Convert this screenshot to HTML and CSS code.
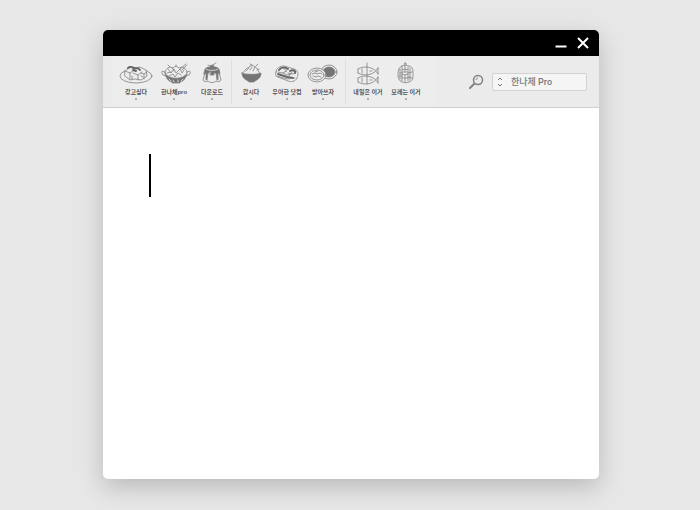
FILE: index.html
```html
<!DOCTYPE html>
<html lang="ko">
<head>
    <meta charset="UTF-8">
    <meta name="viewport" content="width=device-width, initial-scale=1.0">
    <title>한나체 Pro</title>
    <link rel="stylesheet" href="styles.css">
</head>
<body>

<div class="window">
    <header class="title-bar">
        <button class="window-btn" type="button" aria-label="최소화">
            <svg width="12" height="12" viewBox="0 0 12 12"><path d="M0.500 9.500h11"/></svg>
        </button>
        <button class="window-btn" type="button" aria-label="닫기">
            <svg width="12" height="12" viewBox="0 0 12 12"><path d="M1 1l10 10M11 1L1 11"/></svg>
        </button>
    </header>

    <div class="toolbar">
        <nav class="tools">
            <div class="tool-group">
                <button class="tool" type="button">
                    <!-- 접시 위의 두부 -->
                    <svg class="icon" viewBox="0 0 36 26">
                        <ellipse cx="18" cy="17" rx="16" ry="7"/>
                        <path class="paper" d="M7 12l5-4 5 1 5-1 6 3 1 6-6 4-6-1-5 1-5-4z"/>
                        <path d="M7 12l5 2v6M12 14l4-3M15 14l5 2v5M20 16l4-3M23 14l3 1v5M26 15l3-2M14 17v3M23 17l2 1"/>
                        <path class="thick" d="M10 9c2-2 4-1 6 0s4-1 6 2M15 11l3 1"/>
                    </svg>
                    <span class="tool-name">갖고싶다</span>
                </button>
                <button class="tool" type="button">
                    <!-- 전골 냄비 -->
                    <svg class="icon" viewBox="0 0 36 26">
                        <path class="fill" d="M9 14c1 5 3 8 7 9v1h8v-1c4-1 6-4 7-9z"/>
                        <path d="M9 13c-4-2-4 0-2 3l3 1M31 13c4-2 4 0 2 3l-3 1"/>
                        <path class="paper" d="M9 14c0-3 2-5 5-6l3 1 3-2 3 2 3-1c3 1 5 3 5 6-3 7-19 7-22 0z"/>
                        <path d="M12 10l3 4 3-4 2 4 4-4 2 4 2-3M11 14l4-1M16 9l2 3M13 17l4-2 2 3 3-4 3 2M24 10l6-5M26 11l5-5M14 8l-2-2M20 7V6"/>
                        <path class="paper-line" d="M13 20l2 2M17 21l1 2M22 21v2M27 20l-2 2"/>
                    </svg>
                    <span class="tool-name">한나체pro</span>
                </button>
                <button class="tool" type="button">
                    <!-- 푸딩 -->
                    <svg class="icon" viewBox="0 0 36 26">
                        <path class="paper" d="M12 10L9 21c1 2 3 2 5 1 2 2 6 2 8 0 2 1 4 1 5-1l-3-11z"/>
                        <path class="fill" d="M11 10c1-3 13-3 14 0l1 5-2-1v7h-1l-1-7h-2v2h-4v-2h-2l-1 7h-1v-7l-2 1z"/>
                        <path class="paper-line" d="M12 10c3 2 9 2 12 0M16 13v2"/>
                        <circle class="fill" cx="18" cy="8" r="2"/>
                        <path d="M18 7c1-2 3-2 4-3M14 6l2 1"/>
                    </svg>
                    <span class="tool-name">다운로드</span>
                </button>
            </div>

            <div class="tool-group narrow">
                <button class="tool" type="button">
                    <!-- 밥 한 그릇 -->
                    <svg class="icon" viewBox="0 0 36 26">
                        <path class="paper" d="M10 15c0-3 2-3 3-5 2-2 3-1 4-3 2-1 3-1 5 1 3 1 3 4 5 7z"/>
                        <path d="M13 12l3-3M17 11l2-3M20 12l2-4M23 7l2-2M24 11l2-1M19 6l-2-1"/>
                        <path class="fill" d="M9 14c4 2 15 2 19 0 0 4-2 6-6 8l-1 1h-5l-1-1c-4-2-6-4-6-8z"/>
                    </svg>
                    <span class="tool-name">갑시다</span>
                </button>
                <button class="tool" type="button">
                    <!-- 도시락 -->
                    <svg class="icon" viewBox="0 0 36 26">
                        <path class="paper" d="M7 13c0-4 4-6 8-6l10 3c4 1 5 5 3 9-2 4-6 4-9 3L9 18c-3-1-3-3-2-5z"/>
                        <path class="thick" d="M10 11c2-3 6-3 9-1M21 12c3-2 6 0 5 2M9 15l9 3 6 1"/>
                        <path d="M9 13l4 1 5-2-3-2M19 14l5 1 2-1M8 17l10 3 8-1M14 14l4 2 4-1M20 17l3-4"/>
                    </svg>
                    <span class="tool-name">우아한 닷컴</span>
                </button>
                <button class="tool" type="button">
                    <!-- 겹쳐 놓은 접시 -->
                    <svg class="icon" viewBox="0 0 36 26">
                        <ellipse class="paper" cx="24" cy="13" rx="8" ry="7"/>
                        <ellipse class="fill" cx="24" cy="13" rx="6" ry="5"/>
                        <ellipse class="paper" cx="12" cy="16" rx="9" ry="7"/>
                        <ellipse cx="12" cy="16" rx="7" ry="5"/>
                        <path d="M7 15l3-1 2 1 3-1 2 1M8 17l3 1 2-1 3 1M10 13l3-1"/>
                    </svg>
                    <span class="tool-name">받아쓰자</span>
                </button>
            </div>

            <div class="tool-group">
                <button class="tool" type="button">
                    <!-- 생선 꼬치 -->
                    <svg class="icon" viewBox="0 0 36 26">
                        <path d="M17 4v21"/>
                        <path d="M28 9c-3 7-14 9-20 5M28 15c-3-7-14-9-20-5M28 9v6M8 10v4M12 10v4M20 12h2"/>
                        <path d="M28 18c-3 7-14 9-20 5M28 24c-3-7-14-9-20-5M28 18v6M8 19v4M12 19v4M20 21h2"/>
                    </svg>
                    <span class="tool-name">내일은 이거</span>
                </button>
                <button class="tool" type="button">
                    <!-- 어묵 꼬치 -->
                    <svg class="icon" viewBox="0 0 36 26">
                        <path d="M17 4h1v5h-1z"/>
                        <path class="paper" d="M14 7c2-1 5-1 7 0 4 1 4 4 4 8s0 7-4 8c-2 1-5 1-7 0-3-1-4-4-4-8s1-7 4-8z"/>
                        <path d="M14 8v14M17 7v6M20 8v14M22 9v12M12 10v10M14 11l3-1 3 1M12 14h2M14 15l3 1 3-1M20 14l4-1M14 19h6M20 18l4 1M17 16v7M11 17h3M15 13h4"/>
                    </svg>
                    <span class="tool-name">모레는 이거</span>
                </button>
            </div>
        </nav>

        <div class="font-picker">
            <label for="font" aria-label="글꼴">
                <svg class="search-icon" width="16" height="16" viewBox="0 0 16 16">
                    <circle cx="10" cy="6" r="4.500"/>
                    <path class="shine" d="M8 6c0-1 1-2 2-2"/>
                    <path class="handle" d="M6 10l-4 4"/>
                </svg>
            </label>
            <div class="select-box">
                <svg class="arrows" width="6" height="10" viewBox="0 0 6 10"><path d="M1 3l2-2 2 2M1 7l2 2 2-2"/></svg>
                <select id="font">
                    <option>한나체 Pro</option>
                </select>
            </div>
        </div>
    </div>

    <main class="editor">
        <span class="cursor"></span>
        <textarea class="text" aria-label="내용"></textarea>
    </main>
</div>

</body>
</html>
```

FILE: styles.css
```css
* {
    box-sizing: border-box;
}
body {
    font-family: "Liberation Sans", "Noto Sans CJK KR", sans-serif;
    margin: 0;
    padding: 30px 101px 31px 103px;
    min-height: 100vh;
    display: flex;
    background-color: #e7e7e7;
}
button {
    border: 0;
    padding: 0;
    background: none;
    font-family: inherit;
    cursor: pointer;
}
.window {
    flex: 1;
    display: flex;
    flex-direction: column;
    background-color: #fff;
    border-radius: 5px;
    overflow: hidden;
    box-shadow: 0 8px 24px rgba(0, 0, 0, 0.2);
}

/* 제목 표시줄 */
.title-bar {
    display: flex;
    justify-content: flex-end;
    align-items: center;
    gap: 10px;
    height: 26px;
    padding-right: 10px;
    background-color: #000;
}
.window-btn {
    display: flex;
}
.window-btn svg {
    fill: none;
    stroke: #fff;
    stroke-width: 2;
}

/* 도구 모음 */
.toolbar {
    display: flex;
    flex-wrap: wrap;
    justify-content: space-between;
    align-items: center;
    padding: 0 12px 0 10px;
    background-color: #ebebeb;
    border-bottom: 1px solid #cfcfcf;
}
.tools {
    display: flex;
    padding: 3px 10px 3px 4px;
    background-color: #ededed;
}
.tool-group {
    display: flex;
}
.tool-group + .tool-group {
    border-left: 1px solid #dedede;
}
.tool-group:last-child {
    padding-left: 3px;
}
.tool {
    display: flex;
    flex-direction: column;
    align-items: center;
    width: 38px;
    height: 45px;
}
.narrow {
    padding: 0 4px 0 1px;
}
.narrow .tool {
    width: 36px;
}
.tool::after {
    content: '';
    width: 2px;
    height: 2px;
    margin-top: 2px;
    border-radius: 50%;
    background-color: #999;
}
.tool-name {
    margin-top: 3px;
    color: #555;
    font-size: 6px;
    font-weight: bold;
    line-height: 8px;
    white-space: nowrap;
}
.icon {
    width: 36px;
    height: 26px;
    flex-shrink: 0;
    fill: none;
    stroke: #808080;
    stroke-width: 0.8;
    stroke-linecap: round;
    stroke-linejoin: round;
}
.icon .fill {
    fill: #747474;
}
.icon .paper {
    fill: #ededed;
}
.icon .paper-line {
    stroke: #ededed;
}
.icon .thick {
    stroke: #666;
    stroke-width: 2;
}

/* 글꼴 선택 */
.font-picker {
    display: flex;
    align-items: center;
    gap: 8px;
}
.font-picker label {
    display: flex;
}
.search-icon {
    fill: none;
    stroke: #808080;
    stroke-width: 1.5;
}
.search-icon .shine {
    stroke-width: 1;
}
.search-icon .handle {
    stroke-width: 2;
    stroke-linecap: round;
}
.select-box {
    display: flex;
    align-items: center;
    gap: 8px;
    width: 95px;
    height: 18px;
    padding-left: 4px;
    border: 1px solid #d2d2d2;
    border-radius: 2px;
    background-color: #f5f5f5;
}
.arrows {
    fill: none;
    stroke: #777;
}
.select-box select {
    flex: 1;
    min-width: 0;
    height: 16px;
    padding: 0;
    border: 0;
    appearance: none;
    background: none;
    color: #777;
    font-family: Roboto, "Noto Sans CJK KR", sans-serif;
    font-size: 9px;
    font-weight: 500;
    line-height: 16px;
}

/* 편집 영역 */
.editor {
    flex: 1;
    display: flex;
    align-items: flex-start;
    padding: 46px;
}
.cursor {
    width: 2px;
    height: 43px;
    background-color: #000;
}
.text {
    flex: 1;
    align-self: stretch;
    padding: 0;
    border: 0;
    outline: 0;
    resize: none;
    background: none;
    font-family: inherit;
    font-size: 36px;
    line-height: 43px;
}
```
